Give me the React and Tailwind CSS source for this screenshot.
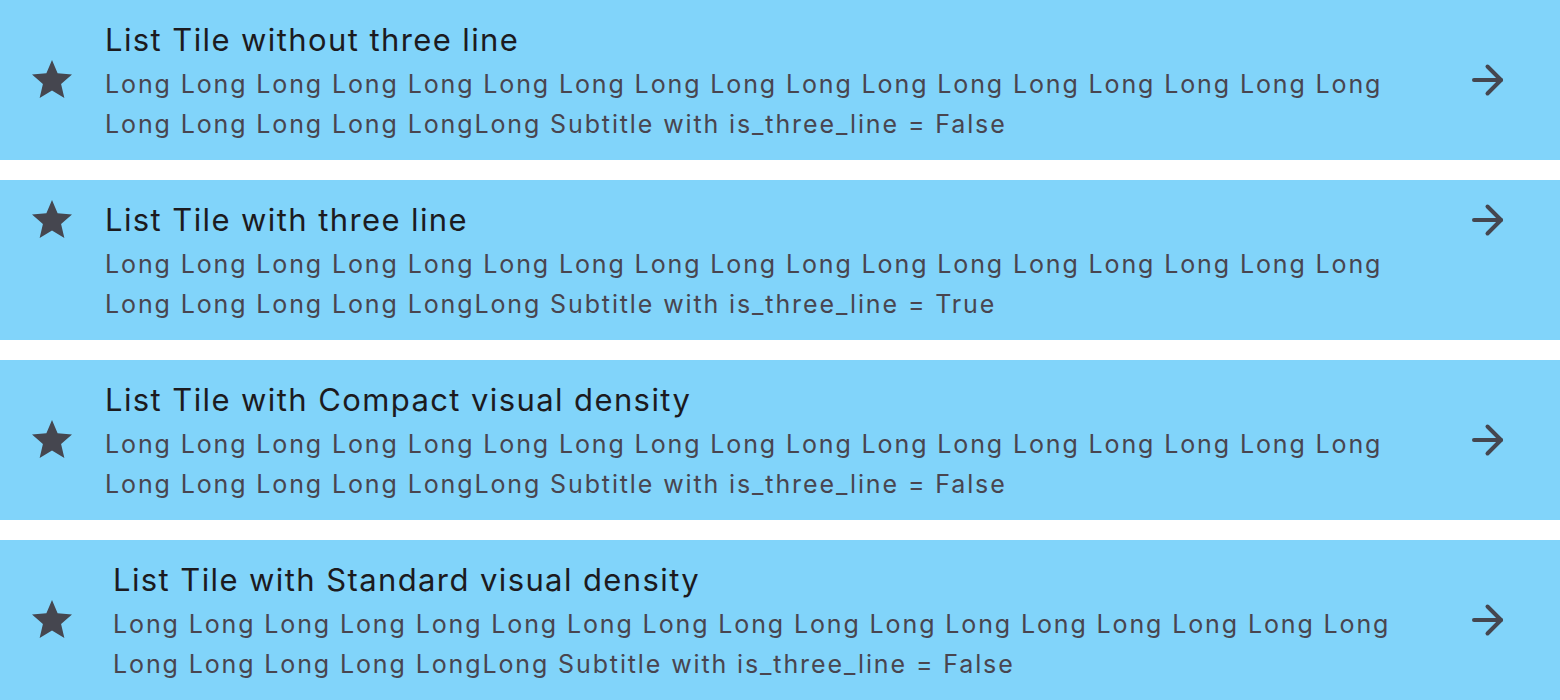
import React from 'react';

const line1 = Array(17).fill('Long').join(' ');

const tiles = [
    { title: 'List Tile without three line', tail: 'False', threeLine: false, gap: 'gap-[29px]' },
    { title: 'List Tile with three line', tail: 'True', threeLine: true, gap: 'gap-[29px]' },
    { title: 'List Tile with Compact visual density', tail: 'False', threeLine: false, gap: 'gap-[29px]' },
    { title: 'List Tile with Standard visual density', tail: 'False', threeLine: false, gap: 'gap-[37px]' },
];

const StarIcon = () => (
    <svg viewBox="0 0 24 24" className="w-[48px] h-[48px]" fill="#45464f">
        <path d="M12 17.27L18.18 21l-1.64-7.03L22 9.24l-7.19-.61L12 2 9.19 8.63 2 9.24l5.46 4.73L5.82 21z" />
    </svg>
);

const ArrowIcon = () => (
    <svg viewBox="0 0 48 48" className="w-[48px] h-[48px]" fill="none" stroke="#45464f" strokeWidth="4" strokeLinecap="round" strokeLinejoin="round">
        <path d="M10 24H37" />
        <path d="M23.5 10.5L37 24L23.5 37.5" />
    </svg>
);

const Tile = ({ title, tail, threeLine, gap }) => (
    <div className={`flex ${threeLine ? 'items-start' : 'items-center'} h-[160px] bg-[#81d4fa] pl-[28px] pr-[48px] py-[16px]`}>
        <div className="shrink-0">
            <StarIcon />
        </div>
        <div className={`flex flex-1 ${threeLine ? 'items-start' : 'items-center'} ${gap}`}>
            <div className="w-0" />
            <div className="flex-1 min-w-0">
                <div className="text-[31px] leading-[48px] text-[#1c1b1f] tracking-[1.4px]">{title}</div>
                <div className="text-[25px] leading-[40px] text-[#49454f] tracking-[1.88px] whitespace-nowrap">
                    <div>{line1}</div>
                    <div>{`Long Long Long Long LongLong Subtitle with is_three_line = ${tail}`}</div>
                </div>
            </div>
            <div className="shrink-0">
                <ArrowIcon />
            </div>
        </div>
    </div>
);

export default function App() {
    return (
        <div className="w-[1560px] h-[700px] bg-white flex flex-col gap-[20px] overflow-hidden" style={{ fontFamily: 'Inter, "Noto Sans", sans-serif' }}>
            {tiles.map(t => (
                <Tile key={t.title} {...t} />
            ))}
        </div>
    );
}
